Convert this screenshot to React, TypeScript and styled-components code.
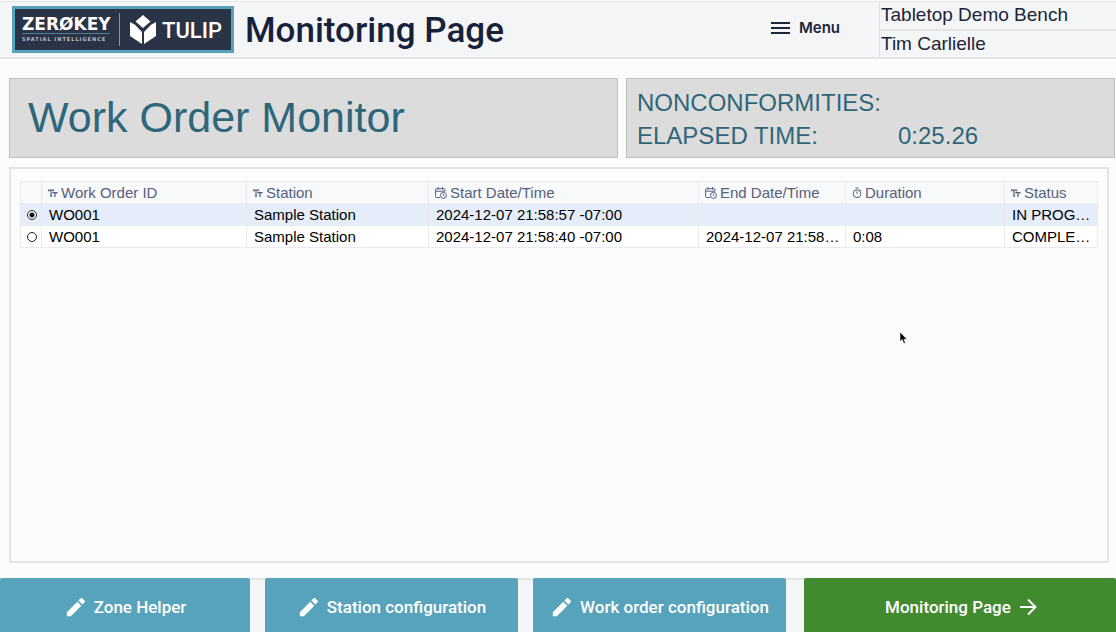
import React, { useState } from "react";
import styled, { createGlobalStyle } from "styled-components";

const GlobalStyle = createGlobalStyle`
  *, *::before, *::after { box-sizing: border-box; }
  body {
    margin: 0;
    background: #fcfcfc;
    color: #1c2438;
    font-family: "Liberation Sans", Arial, sans-serif;
  }
  h1, h2, p, dl, dd, dt { margin: 0; font-weight: 400; }
`;

const Page = styled.div`
  display: flex;
  flex-direction: column;
  min-height: 100vh;
`;

const Header = styled.header`
  display: flex;
  align-items: stretch;
  height: 58px;
  margin-top: 1px;
  background: #f4f5f7;
  border-top: 1px solid #e6e7e9;
  border-bottom: 2px solid #e2e4e6;
`;

const Brand = styled.div`
  display: flex;
  align-items: center;
  width: 222px;
  height: 47px;
  margin: 4px 0 0 12px;
  padding: 0 7px;
  border: 3px solid #57a3bb;
  background: #2b3446;
  color: #fff;
`;

const ZeroKey = styled.div`
  display: flex;
  flex-direction: column;
  width: 88px;
`;

const ZeroKeyName = styled.span`
  border-bottom: 1px solid #4b7f96;
  font: 700 17px/17px "DejaVu Sans", sans-serif;
`;

const ZeroKeyTag = styled.span`
  color: #b9bfca;
  font: 700 5px/10px "DejaVu Sans", sans-serif;
  letter-spacing: 1px;
  white-space: nowrap;
`;

const BrandRule = styled.span`
  width: 1px;
  height: 33px;
  margin: 0 10px 0 9px;
  background: #8d94a1;
`;

const TulipName = styled.span`
  margin-left: 6px;
  padding-top: 2px;
  font: 500 22px/24px Roboto, sans-serif;
`;

const PageTitle = styled.h1`
  flex: 1;
  margin-left: 11px;
  color: #18213a;
  font: 500 35px/58px Roboto, sans-serif;
  white-space: nowrap;
`;

const MenuButton = styled.button`
  display: flex;
  align-items: center;
  gap: 9px;
  margin-right: 39px;
  padding: 0 0 4px;
  border: 0;
  background: none;
  color: #1c2438;
  font: 600 15px/20px Inter, sans-serif;
`;

const Session = styled.div`
  display: flex;
  flex-direction: column;
  width: 237px;
  border-left: 1px solid #dfe1e3;
`;

const SessionLine = styled.p`
  flex: 1;
  padding-left: 1px;
  font-size: 19px;
  line-height: 26px;

  & + & {
    border-top: 2px solid #e2e4e6;
  }
`;

const Main = styled.main`
  display: flex;
  flex: 1;
  flex-direction: column;
  gap: 9px;
  padding: 19px 1px 15px 9px;
`;

const Summary = styled.div`
  display: grid;
  grid-template-columns: 609fr 489fr;
  gap: 8px;
`;

const Card = styled.section`
  display: flex;
  align-items: center;
  height: 80px;
  border: 1px solid #bfbfbf;
  background: #dcdcdc;
  color: #30667a;
`;

const CardTitle = styled.h2`
  padding: 0 0 2px 18px;
  font-size: 43px;
  line-height: 48px;
`;

const Stats = styled.dl`
  display: grid;
  grid-template-columns: 261px 1fr;
  grid-auto-rows: 33px;
  width: 100%;
  padding: 2px 0 0 10px;
  font-size: 24px;
  line-height: 33px;
`;

const Panel = styled.section`
  flex: 1;
  margin-right: 6px;
  padding: 12px 9px;
  border: 2px solid #e4e4e4;
`;

const Orders = styled.table`
  width: 100%;
  border-collapse: collapse;
  table-layout: fixed;
  background: #fff;
  color: #000;
  font-size: 15px;
  line-height: 21px;
`;

const Column = styled.col<{ $width: number }>`
  width: ${(p) => p.$width}px;
`;

const HeadCell = styled.th`
  padding: 0 6px;
  border: 1px solid #e8eaee;
  background: #f8f9fb;
  color: #56607a;
  font-weight: 400;
  text-align: left;
`;

const HeadLabel = styled.span`
  display: flex;
  align-items: center;
  gap: 3px;
  white-space: nowrap;
`;

const Row = styled.tr<{ $selected: boolean }>`
  background: ${(p) => (p.$selected ? "#e5edfa" : "#fff")};
`;

const Cell = styled.td`
  padding: 0 4px 0 7px;
  border: 1px solid #e8eaee;
  border-top-width: 0;
  white-space: nowrap;
`;

const SelectCell = styled(Cell)`
  padding: 0 0 0 2px;
`;

const Radio = styled.input`
  display: block;
  width: 10px;
  height: 10px;
  margin: 0 auto;
  border: 1px solid #222;
  border-radius: 50%;
  appearance: none;
  background: #fff;

  &:checked {
    background: radial-gradient(circle, #111 0 2px, #fff 3px);
  }
`;

const Footer = styled.footer`
  display: grid;
  grid-template-columns: 250fr 253fr 253fr 315fr;
  gap: 15px;
  height: 54px;
  background: #f4f5f7;
  box-shadow: inset 0 2px #e4e4e4;
`;

const NavButton = styled.button<{ $current?: boolean }>`
  display: flex;
  align-items: center;
  justify-content: center;
  gap: 8px;
  margin-left: ${(p) => (p.$current ? 3 : 0)}px;
  padding: 3px 0 0 2px;
  border: 0;
  border-radius: 2px 2px 0 0;
  background: ${(p) => (p.$current ? "#428a2f" : "#57a3bb")};
  color: #fff;
  font: 500 17px/24px Roboto, sans-serif;
  white-space: nowrap;
`;

const Cursor = styled.svg`
  position: absolute;
  top: 331px;
  left: 899px;
  pointer-events: none;
`;

const TulipMark = () => (
  <svg width="26" height="29" viewBox="0 0 26 29" fill="#fff" aria-hidden="true">
    <path d="M13 0 20.5 6.5 13 13 5.5 6.5Z" />
    <path d="M0 7 5 9.8 12 17V29L0 21Z" />
    <path d="M26 7 21 9.8 14 17V29L26 21Z" />
  </svg>
);

const MenuIcon = () => (
  <svg width="19" height="14" viewBox="0 0 19 14" fill="none" stroke="currentColor" strokeWidth="2" aria-hidden="true">
    <path d="M0 2h19M0 7h19M0 12h19" />
  </svg>
);

const TextIcon = () => (
  <svg width="10" height="10" viewBox="0 0 10 10" fill="none" stroke="currentColor" strokeWidth="1.2" aria-hidden="true">
    <path d="M.5 3.2V2.1H5.5V3.2M3 2.1V8.2M2 8.2H4M5 5.4V4.6H9V5.4M7 4.6V8.2M6.2 8.2H7.8" />
  </svg>
);

const DateIcon = () => (
  <svg width="12" height="12" viewBox="0 0 12 12" fill="none" stroke="currentColor" aria-hidden="true">
    <path d="M5 10.5H1.5Q.6 10.5.6 9.6V2.6Q.6 1.7 1.5 1.7H9Q9.9 1.7 9.9 2.6V4.5M.6 4.2H9.9M3 0V2.6M7.5 0V2.6" />
    <circle cx="8.4" cy="8.4" r="3" />
    <path d="M8.4 6.8V8.5L9.6 9.2" strokeWidth=".8" />
  </svg>
);

const TimerIcon = () => (
  <svg width="10" height="12" viewBox="0 0 10 12" fill="none" stroke="currentColor" aria-hidden="true">
    <circle cx="5" cy="6.7" r="3.9" />
    <path d="M3.4 1H6.6M5 4.4V7M8.1 2.8 9 3.7" />
  </svg>
);

const PencilIcon = () => (
  <svg width="20" height="20" viewBox="0 0 20 20" fill="#fff" aria-hidden="true">
    <path d="M.8 15.2V19.2H4.8L15.3 8.7 11.3 4.7ZM18.7 5.3Q19.4 4.6 18.7 3.8L16.2 1.3Q15.4.6 14.7 1.3L12.4 3.6 16.4 7.6Z" />
  </svg>
);

const ArrowIcon = () => (
  <svg width="18" height="18" viewBox="0 0 18 18" fill="none" stroke="#fff" strokeWidth="1.9" aria-hidden="true">
    <path d="M1 9H16M9 1.5 16.5 9 9 16.5" />
  </svg>
);

const columns = [
  { label: "Work Order ID", width: 205, Icon: TextIcon },
  { label: "Station", width: 182, Icon: TextIcon },
  { label: "Start Date/Time", width: 270, Icon: DateIcon },
  { label: "End Date/Time", width: 147, Icon: DateIcon },
  { label: "Duration", width: 159, Icon: TimerIcon },
  { label: "Status", width: 93, Icon: TextIcon },
];

const orders = [
  ["WO001", "Sample Station", "2024-12-07 21:58:57 -07:00", "", "", "IN PROG…"],
  ["WO001", "Sample Station", "2024-12-07 21:58:40 -07:00", "2024-12-07 21:58…", "0:08", "COMPLE…"],
];

const steps = ["Zone Helper", "Station configuration", "Work order configuration"];

export default function App() {
  const [selected, setSelected] = useState(0);

  return (
    <Page>
      <GlobalStyle />
      <Header>
        <Brand>
          <ZeroKey>
            <ZeroKeyName>ZERØKEY</ZeroKeyName>
            <ZeroKeyTag>SPATIAL INTELLIGENCE</ZeroKeyTag>
          </ZeroKey>
          <BrandRule />
          <TulipMark />
          <TulipName>TULIP</TulipName>
        </Brand>
        <PageTitle>Monitoring Page</PageTitle>
        <MenuButton type="button">
          <MenuIcon />
          Menu
        </MenuButton>
        <Session>
          <SessionLine>Tabletop Demo Bench</SessionLine>
          <SessionLine>Tim Carlielle</SessionLine>
        </Session>
      </Header>

      <Main>
        <Summary>
          <Card>
            <CardTitle>Work Order Monitor</CardTitle>
          </Card>
          <Card>
            <Stats>
              <dt>NONCONFORMITIES:</dt>
              <dd />
              <dt>ELAPSED TIME:</dt>
              <dd>0:25.26</dd>
            </Stats>
          </Card>
        </Summary>

        <Panel>
          <Orders>
            <colgroup>
              <Column $width={21} />
              {columns.map((c) => (
                <Column key={c.label} $width={c.width} />
              ))}
            </colgroup>
            <thead>
              <tr>
                <HeadCell aria-label="Selected" />
                {columns.map(({ label, Icon }) => (
                  <HeadCell key={label} scope="col">
                    <HeadLabel>
                      <Icon />
                      {label}
                    </HeadLabel>
                  </HeadCell>
                ))}
              </tr>
            </thead>
            <tbody>
              {orders.map((order, i) => (
                <Row key={order[2]} $selected={i === selected}>
                  <SelectCell>
                    <Radio
                      type="radio"
                      name="order"
                      aria-label={`${order[0]}, started ${order[2]}`}
                      checked={i === selected}
                      onChange={() => setSelected(i)}
                    />
                  </SelectCell>
                  {order.map((value, c) => (
                    <Cell key={columns[c].label}>{value}</Cell>
                  ))}
                </Row>
              ))}
            </tbody>
          </Orders>
        </Panel>
      </Main>

      <Footer>
        {steps.map((step) => (
          <NavButton type="button" key={step}>
            <PencilIcon />
            {step}
          </NavButton>
        ))}
        <NavButton type="button" $current>
          Monitoring Page
          <ArrowIcon />
        </NavButton>
      </Footer>

      <Cursor width="9" height="14" viewBox="0 0 9 14" aria-hidden="true">
        <path d="M1 1V10.6L3.2 8.6 4.8 12.4 6.4 11.7 4.9 8.2H8Z" fill="#000" stroke="#fff" strokeWidth=".6" />
      </Cursor>
    </Page>
  );
}
